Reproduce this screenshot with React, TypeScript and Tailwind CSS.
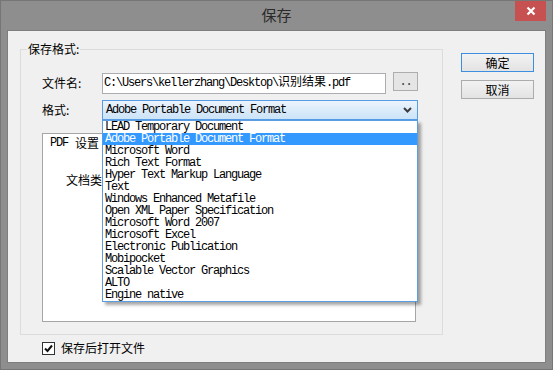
import React from "react";

const mono = "font-['Liberation_Mono','Noto_Sans_CJK_SC',monospace] text-[12px] tracking-[-1.2px]";
const cjk = "font-['Noto_Sans_CJK_SC','Liberation_Sans',sans-serif] text-[12px]";

const items = [
  "LEAD Temporary Document",
  "Adobe Portable Document Format",
  "Microsoft Word",
  "Rich Text Format",
  "Hyper Text Markup Language",
  "Text",
  "Windows Enhanced Metafile",
  "Open XML Paper Specification",
  "Microsoft Word 2007",
  "Microsoft Excel",
  "Electronic Publication",
  "Mobipocket",
  "Scalable Vector Graphics",
  "ALTO",
  "Engine native",
];

export default function App() {
  return (
    <div className="w-[553px] h-[370px] border border-[#767676] bg-[#8e8e8e] flex flex-col text-[#000]">
      {/* title bar */}
      <div className="h-[29px] grid grid-cols-[1fr_auto_1fr]">
        <div />
        <div className={"flex items-center justify-center font-['Noto_Sans_CJK_SC',sans-serif] text-[15px] text-[#2a2a2a]"}>
          保存
        </div>
        <div className="flex justify-end pr-[6px]">
          <div className="w-[31px] h-[20px] bg-[#c75050] flex items-center justify-center">
            <svg width="10" height="10" viewBox="0 0 10 10">
              <path d="M1.5 1.5 L8.5 8.5 M8.5 1.5 L1.5 8.5" stroke="#fff" strokeWidth="2.2" />
            </svg>
          </div>
        </div>
      </div>
      {/* client */}
      <div className="flex-1 mx-[6px] mb-[6px] bg-[#f0f0f0] border border-[#7e7e7e] flex flex-col">
        <div className="flex flex-row">
          <fieldset className="ml-[12px] mt-[11px] w-[423px] border border-[#dcdcdc] p-0">
            <legend className={cjk + " leading-[14px] ml-[6px] px-[1px]"}>保存格式:</legend>
            <div className="pl-[21px] pt-[16px] pb-[12px]">
              {/* row 1 */}
              <div className="flex flex-row items-center">
                <div className={cjk + " w-[60px] leading-[14px]"}>文件名:</div>
                <div className="w-[284px] h-[21px] border border-[#abadb3] bg-white flex items-center pl-[1px]">
                  <span className={mono + " leading-[14px] whitespace-pre"}>
                    C:\Users\kellerzhang\Desktop\<span className="tracking-normal">识别结果</span>.pdf
                  </span>
                </div>
                <div className="ml-[7px] mb-[3px] w-[25px] h-[19px] border border-[#adadad] bg-[#e5e5e5] flex items-center justify-center">
                  <span className={mono + " leading-[12px] text-[#333]"}>..</span>
                </div>
              </div>
              {/* row 2 */}
              <div className="flex flex-row items-center mt-[6px]">
                <div className={cjk + " w-[60px] leading-[14px]"}>格式:</div>
                <div className="relative w-[316px] h-[20px]">
                  <div className="w-full h-full border border-[#569de5] bg-gradient-to-b from-[#ecf4fc] to-[#cbe3f8] flex items-center pl-[3px] pr-[5px]">
                    <span className={mono + " leading-[14px] flex-1 whitespace-pre"}>Adobe Portable Document Format</span>
                    <svg width="9" height="6" viewBox="0 0 9 6">
                      <path d="M1 1 L4.5 4.5 L8 1" stroke="#3c3c3c" strokeWidth="2" fill="none" />
                    </svg>
                  </div>
                  {/* dropdown list */}
                  <div className="absolute left-0 top-full w-[316px] h-[182px] border border-[#5a9de0] bg-white shadow-[3px_3px_3px_rgba(0,0,0,0.35)] z-10 flex flex-col">
                    {items.map((t, i) => (
                      <div
                        key={t}
                        className={
                          mono +
                          " h-[12px] leading-[12px] pl-[2px] whitespace-pre " +
                          (i === 1 ? "bg-[#3399ff] text-white" : "")
                        }
                      >
                        {t}
                      </div>
                    ))}
                  </div>
                </div>
              </div>
              {/* inner panel */}
              <div className="mt-[13px] w-[374px] h-[189px] border border-[#a5a5a5] bg-white pl-[7px] pt-[2px] flex flex-col">
                <div className="flex items-center h-[14px]">
                  <span className={mono + " leading-[14px] whitespace-pre"}>PDF </span>
                  <span className={cjk + " leading-[14px] ml-[1px]"}>设置</span>
                </div>
                <div className={cjk + " leading-[14px] ml-[16px] mt-[23px]"}>文档类</div>
              </div>
            </div>
          </fieldset>
          <div className="ml-[18px] mt-[22px] flex flex-col gap-[8px]">
            <div className="w-[73px] h-[19px] border border-[#3c8fe0] bg-gradient-to-b from-[#f2f2f2] to-[#e3e3e3] flex items-center justify-center">
              <span className={cjk + " leading-[14px]"}>确定</span>
            </div>
            <div className="w-[73px] h-[19px] border border-[#acacac] bg-gradient-to-b from-[#f2f2f2] to-[#e3e3e3] flex items-center justify-center">
              <span className={cjk + " leading-[14px]"}>取消</span>
            </div>
          </div>
        </div>
        {/* checkbox row */}
        <div className="ml-[34px] mt-[6px] flex flex-row items-center">
          <div className="w-[13px] h-[13px] border border-[#333] bg-white flex items-center justify-center">
            <svg width="9" height="9" viewBox="0 0 9 9">
              <path d="M1 4.5 L3.5 7 L8 1.5" stroke="#111" strokeWidth="2" fill="none" />
            </svg>
          </div>
          <span className={cjk + " leading-[14px] ml-[6px]"}>保存后打开文件</span>
        </div>
      </div>
    </div>
  );
}
